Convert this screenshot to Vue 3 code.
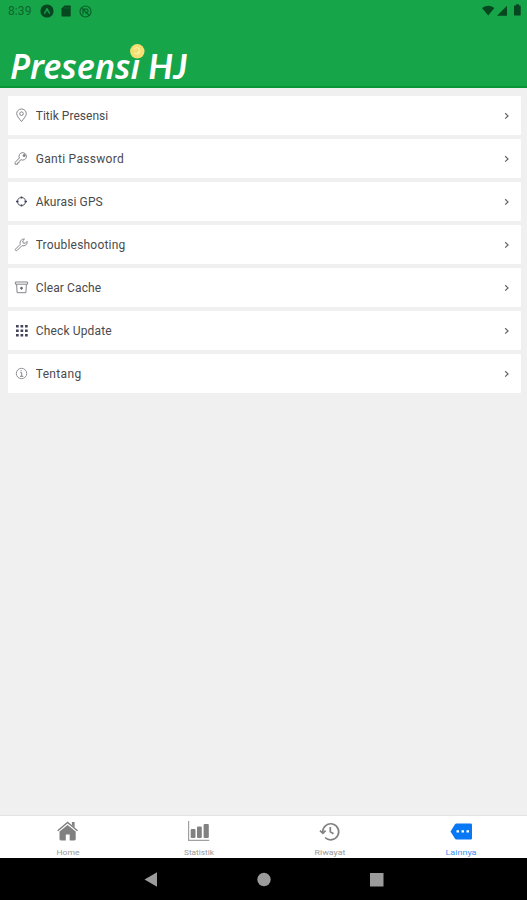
<script setup>
const items = [
  { icon: 'pin', label: 'Titik Presensi', width: 72.5 },
  { icon: 'key', label: 'Ganti Password', width: 88 },
  { icon: 'gps', label: 'Akurasi GPS', width: 67 },
  { icon: 'wrench', label: 'Troubleshooting', width: 89.5 },
  { icon: 'archive', label: 'Clear Cache', width: 65.5 },
  { icon: 'grid', label: 'Check Update', width: 76 },
  { icon: 'info', label: 'Tentang', width: 45.5 },
]
const tabs = [
  { icon: 'home', label: 'Home', width: 23 },
  { icon: 'stats', label: 'Statistik', width: 30 },
  { icon: 'history', label: 'Riwayat', width: 31 },
  { icon: 'more', label: 'Lainnya', width: 31, active: true },
]
const dots = [2, 6.5, 11]
</script>

<template>
  <div class="screen">
    <header class="header">
      <div class="status">
        <span class="time">8:39</span>
        <svg class="s-icon" width="14" height="14" viewBox="0 0 14 14">
          <circle cx="7" cy="7" r="6.6" fill="#07471f" />
          <path d="M3.7 9.5 6.5 4h1L10.3 9.5 9.3 10 7 6.7 4.7 10Z" fill="#13a048" />
        </svg>
        <svg class="s-icon sd" width="10" height="12" viewBox="0 0 10 12">
          <path d="M3.5.5H9q.7 0 .7.7v9.6q0 .7-.7.7H1.2q-.7 0-.7-.7V3.6Z" fill="#07471f" />
          <path d="M4 2v2M5.8 2v2M7.6 2v2" stroke="#0d6d32" stroke-width=".7" />
        </svg>
        <svg class="s-icon" width="13" height="13" viewBox="0 0 13 13" fill="none" stroke="#086029">
          <circle cx="6.5" cy="6.5" r="5.5" stroke-width="1.2" />
          <path d="M4 9.500V4.200h3.300a1.800 1.800 0 0 1 0 3.600H6M2.600 2.800l7.600 7.700" stroke-width="1.200" />
        </svg>
        <svg class="right" width="40" height="14" viewBox="0 0 40 14" fill="#07471f">
          <path d="M0 4Q6.200-.6 12.400 4L6.200 11.600Z" />
          <path d="M25 1.700V11.700H15Z" />
          <path d="M32.500 1.500H34V.3h3v1.200h1.200q.5 0 .5.500v9q0 .600-.600.600H32.600q-.600 0-.600-.600V2q0-.500.500-.500Z" />
        </svg>
      </div>
      <svg class="logo" width="190" height="48" viewBox="0 0 190 48">
        <text x="10" y="38.500" textLength="130" lengthAdjust="spacingAndGlyphs">Presensi</text>
        <text class="initials" x="148.300" y="38.500" textLength="39" lengthAdjust="spacingAndGlyphs">HJ</text>
        <circle cx="137.300" cy="11.300" r="7.200" fill="#f5df72" />
        <path d="M134 9q3-3 5 0t-1 5M134 13l3 1 3-4" fill="none" stroke="#fff0a6" stroke-width="1.200" />
      </svg>
    </header>

    <main class="list">
      <div v-for="item in items" :key="item.label" class="row">
        <svg class="row-icon" width="15" height="15" viewBox="0 0 15 15" fill="none" stroke="#85858b" stroke-width="1">
          <template v-if="item.icon === 'pin'">
            <path d="M7.500 13.600C5 10.300 2.700 7.800 2.700 5.600a4.800 4.600 0 0 1 9.600 0c0 2.200-2.300 4.700-4.800 8Z" />
            <circle cx="7.500" cy="5.700" r="1.800" />
          </template>
          <template v-else-if="item.icon === 'key'">
            <path d="M7.100 8.700a3.700 3.700 0 1 0-1.700-1.700L1.200 11.300v2h2.300v-1.400h1.400v-1.300Z" />
            <circle cx="10.100" cy="4.600" r="1" fill="#66666d" />
          </template>
          <template v-else-if="item.icon === 'gps'">
            <circle cx="7.500" cy="7.500" r="4" stroke="#67676f" stroke-width="1.100" />
            <path d="M7.500 2.500v2M7.500 10.500v2M2 7.500h2.500M10.500 7.500H13" stroke="#3c3e62" stroke-width="1.500" />
          </template>
          <path
            v-else-if="item.icon === 'wrench'"
            d="M1.500 12.100 6.300 7.300C5.400 4.500 7.300 1.700 10.500 2.100L8.700 3.900l.4 2 2.100.4 1.900-1.900c.5 3.100-2.300 5.100-5.100 4.200l-4.700 4.700c-1.100 1-2.700-.2-1.800-1.200Z"
          />
          <template v-else-if="item.icon === 'archive'">
            <path d="M1.400 2h12.200v2.200H1.400ZM2.600 4.200l.5 8.500h8.800l.5-8.500" />
            <path d="M7.500 6.700v3M6 8.200h3" stroke="#66666c" stroke-width="1.200" />
          </template>
          <g v-else-if="item.icon === 'grid'" fill="#44445c" stroke="none">
            <template v-for="y in dots">
              <rect v-for="x in dots" :key="`${x}-${y}`" :x="x" :y="y" width="2.700" height="2.500" />
            </template>
          </g>
          <template v-else>
            <circle cx="7.500" cy="7.500" r="5.200" stroke="#929297" />
            <path d="M6.300 6.700h1.400v3.600M6 10.300h3.400M7.100 4.100v1.200" stroke="#85858a" />
          </template>
        </svg>
        <svg class="label" width="100" height="20" viewBox="0 0 100 20">
          <text x="-.3" y="14.300" :textLength="item.width">{{ item.label }}</text>
        </svg>
        <svg class="chevron" width="6" height="8" viewBox="0 0 6 8">
          <path d="m1.200 1.200 2.800 2.700-2.800 2.700" fill="none" stroke="#606065" stroke-width="1.200" />
        </svg>
      </div>
    </main>

    <nav class="tabs">
      <div v-for="tab in tabs" :key="tab.label" class="tab" :class="{ active: tab.active }">
        <svg width="24" height="22" viewBox="0 0 24 22">
          <template v-if="tab.icon === 'home'">
            <path d="M3.500 11.600 11.600 5l8.100 6.600v7.500q0 1.400-1.300 1.400h-4.700v-6H9.800v6H4.900q-1.400 0-1.400-1.400Z" fill="currentColor" />
            <path d="m1.700 10.800 9.900-8.400 9.900 8.400" fill="none" stroke="currentColor" stroke-width="1.500" />
            <path d="M15.900 2.100h2.700v5.500l-2.700-2.300Z" fill="currentColor" />
          </template>
          <g v-else-if="tab.icon === 'stats'" fill="currentColor">
            <path d="M1 1h1.200v18.700h20V21H1Z" opacity=".75" />
            <rect x="3.700" y="9" width="4.800" height="9" rx="1" />
            <rect x="10" y="6.500" width="4.800" height="11.500" rx="1" />
            <rect x="16.600" y="4" width="5.200" height="14" rx="1" />
          </g>
          <g v-else-if="tab.icon === 'history'" fill="none" stroke="currentColor" stroke-width="1.700">
            <path d="M4.700 12a8 8 0 1 1 2.400 5.500" />
            <path d="m2 10.600 2.900 2.700 2.700-2.700M12.300 7v4.800l3.200 2" />
          </g>
          <template v-else>
            <path d="M7.500 3.500h14.300q1.200 0 1.200 1.200v13.600q0 1.200-1.200 1.200H7.500q-1 0-1.600-.9L1.500 11.500l4.400-7.100q.6-.9 1.600-.9Z" fill="currentColor" />
            <path d="M7.500 10.300H10v2.300H7.500ZM12.500 10.300H15v2.300h-2.500ZM17.500 10.300H20v2.300h-2.500Z" fill="#fff" />
          </template>
        </svg>
        <svg class="tab-label" width="40" height="12" viewBox="0 0 40 12">
          <text :x="(40 - tab.width) / 2" y="8.700" :textLength="tab.width" lengthAdjust="spacingAndGlyphs">{{ tab.label }}</text>
        </svg>
      </div>
    </nav>

    <footer class="system">
      <svg width="527" height="42" viewBox="0 0 527 42" fill="#9b9b9b">
        <path d="M144.500 21.500 157 14.300v14.400Z" />
        <circle cx="264" cy="21.500" r="6.700" />
        <rect x="370" y="15" width="13.500" height="13.500" />
      </svg>
    </footer>
  </div>
</template>

<style>
body {
  margin: 0;
}
</style>

<style scoped>
.screen {
  width: 527px;
  height: 900px;
  display: flex;
  flex-direction: column;
  background: #f0f0f0;
  font-family: Roboto, sans-serif;
  overflow: hidden;
}
.header {
  height: 88px;
  box-sizing: border-box;
  flex: none;
  background: #17a549;
  border-bottom: 2px solid #099438;
}
.status {
  height: 22px;
  display: flex;
  align-items: center;
  padding: 0 5px 0 8px;
}
.time {
  width: 32px;
  font-size: 12px;
  letter-spacing: 0.1px;
  color: #0b672d;
}
.s-icon {
  margin-right: 7px;
}
.sd {
  margin-right: 8px;
}
.right {
  margin-left: auto;
}
.logo {
  display: block;
  margin-top: 18px;
}
.logo text {
  font-family: "Noto Sans", sans-serif;
  font-size: 34.500px;
  font-weight: 600;
  font-style: italic;
  fill: #fff;
}
.logo .initials {
  font-family: Lato, sans-serif;
  font-weight: 700;
}
.list {
  flex: 1;
  display: flex;
  flex-direction: column;
  gap: 4px;
  padding: 8px 6px 0 8px;
}
.row {
  height: 39px;
  display: flex;
  align-items: center;
  padding: 0 11px 0 6px;
  background: #fff;
  border-radius: 1px;
}
.label {
  margin-left: 7px;
}
.label text {
  font-size: 12px;
  fill: #4a4a4d;
}
.chevron {
  margin-left: auto;
}
.tabs {
  height: 43px;
  box-sizing: border-box;
  flex: none;
  display: grid;
  grid-template-columns: repeat(4, 1fr);
  padding: 4px 0 0 2px;
  background: #fff;
  border-top: 1px solid #e3e3e3;
}
.tab {
  display: flex;
  flex-direction: column;
  align-items: center;
  color: #818181;
}
.tab > svg {
  flex: none;
}
.tab.active {
  color: #0878f5;
}
.tab-label {
  margin-top: 4px;
}
.tab-label text {
  font-size: 7.500px;
  fill: currentColor;
  opacity: 0.8;
}
.system {
  height: 42px;
  flex: none;
  background: #000;
}
.system svg {
  display: block;
}
</style>
